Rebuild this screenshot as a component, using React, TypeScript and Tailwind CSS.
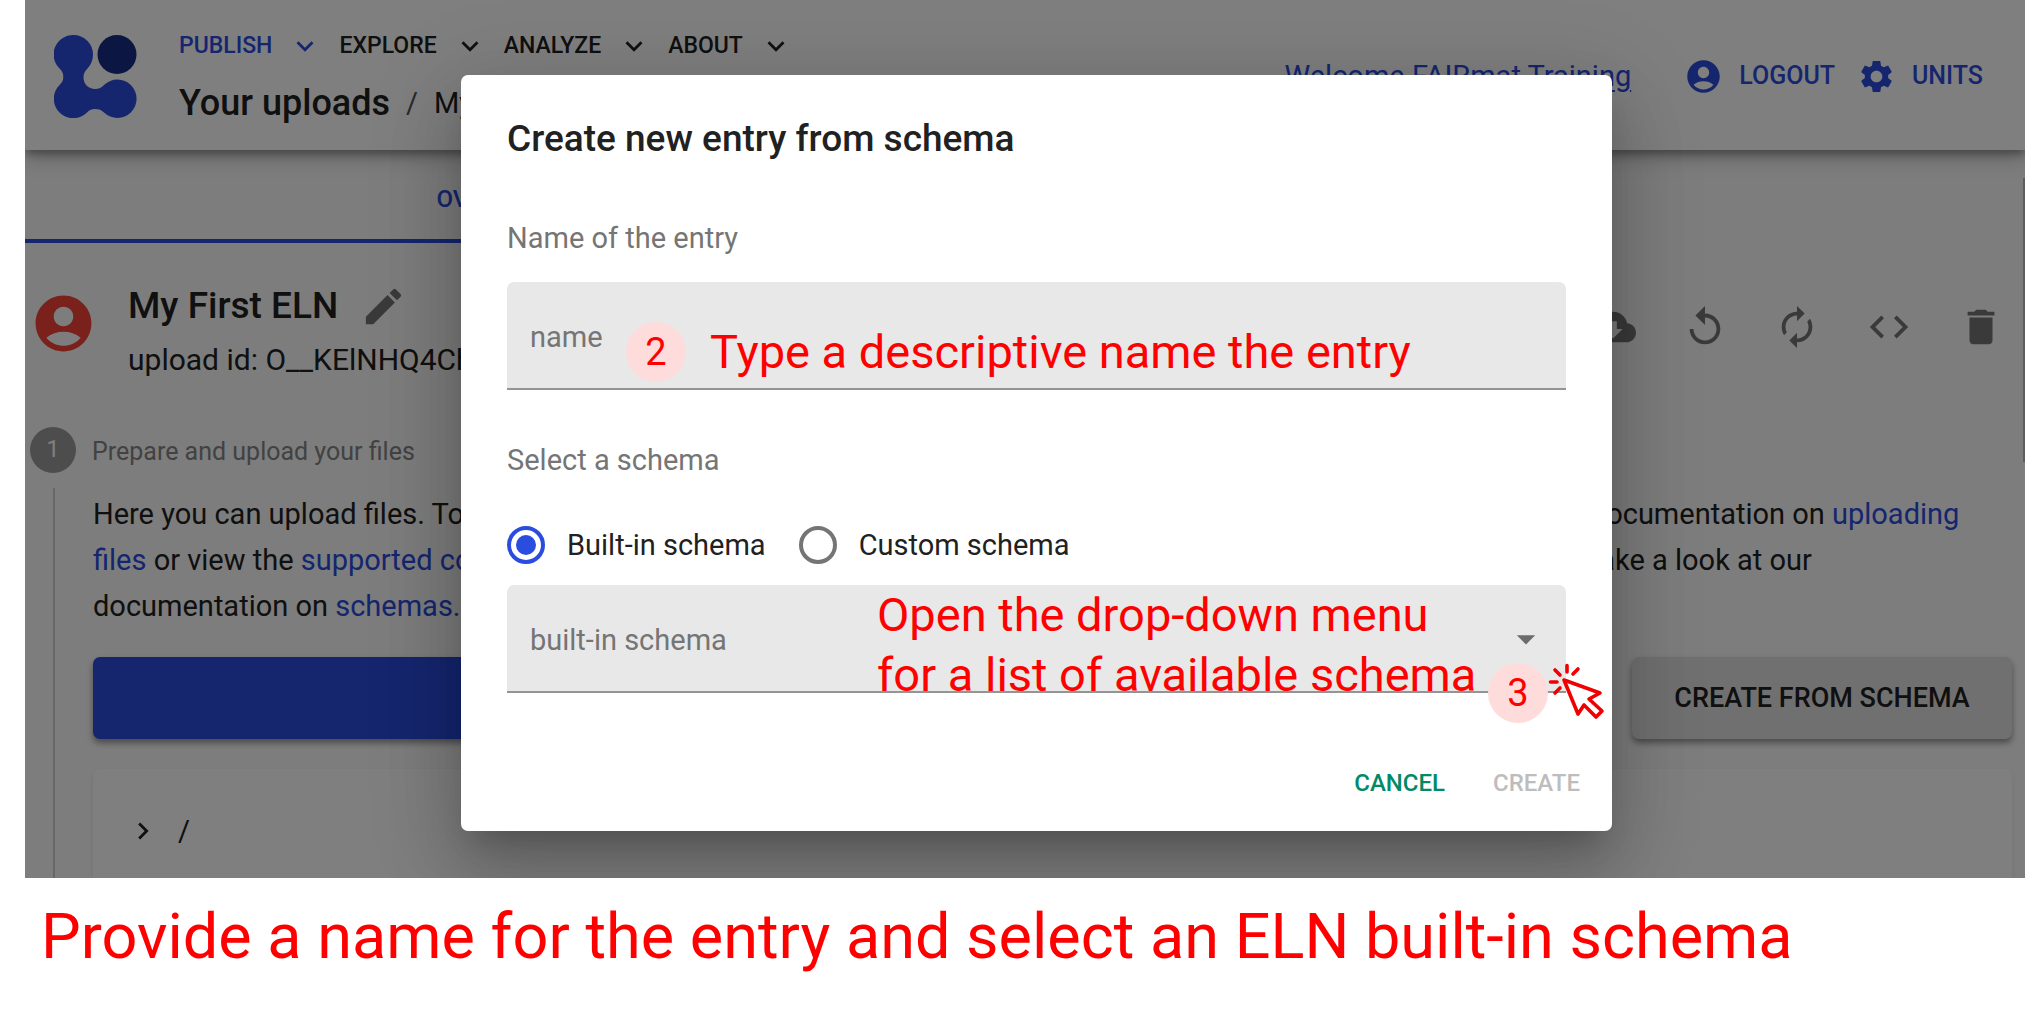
import {
  MdAccountCircle,
  MdArrowDropDown,
  MdAutorenew,
  MdChevronRight,
  MdCloudDownload,
  MdCode,
  MdDelete,
  MdEdit,
  MdExpandMore,
  MdReplay,
  MdSettings,
} from "react-icons/md";

const menu = [
  { label: "PUBLISH", active: true },
  { label: "EXPLORE", active: false },
  { label: "ANALYZE", active: false },
  { label: "ABOUT", active: false },
];

const actions = [
  { label: "Download", Icon: MdCloudDownload },
  { label: "Reload", Icon: MdReplay },
  { label: "Reprocess", Icon: MdAutorenew },
  { label: "API", Icon: MdCode },
  { label: "Delete", Icon: MdDelete },
];

function Logo() {
  return (
    <svg viewBox="0 0 83 83" className="size-[83px] shrink-0" aria-hidden="true">
      <circle cx="63" cy="19.5" r="19.5" fill="#182c84" />
      <path
        fill="#2a4cdf"
        d="M19.5 0A19.5 19.5 0 0 1 39 19.5C39 25 37 30 33.5 33.500C31 36 29.500 38.500 29.500 42.500C29.500 49 34.500 54 41 54C45 54 47.500 52.500 50 50A19.200 19.200 0 1 1 50 77.500C47.500 75 45 74 41 74C37 74 35 75.500 33 77.500A19.400 19.400 0 1 1 5.500 50C8 47.500 9.300 45.500 9.300 42C9.300 38 8 36 5.500 33.500A19.500 19.500 0 0 1 19.500 0Z"
      />
    </svg>
  );
}

function Header() {
  return (
    <header className="relative z-10 flex items-center gap-[42px] bg-white pt-[29px] pr-[42px] pb-[27px] pl-[29px] shadow-[0_4px_8px_rgba(0,0,0,0.3),0_8px_18px_rgba(0,0,0,0.22)]">
      <Logo />
      <div className="flex flex-1 flex-col gap-5">
        <nav className="flex items-center gap-[17px]">
          {menu.map(({ label, active }) => (
            <button
              key={label}
              className={
                active
                  ? "flex items-center gap-4 text-[23px] leading-[34px] font-medium text-[#2a4cdf]"
                  : "flex items-center gap-4 text-[23px] leading-[34px] font-medium"
              }
            >
              {label}
              <MdExpandMore className="size-[34px]" />
            </button>
          ))}
        </nav>
        <div className="flex items-center text-[29px] leading-10">
          <a href="#uploads" className="text-[36px] font-medium">
            Your uploads
          </a>
          <span className="px-4 text-[#555]">/</span>
          <span>My First ELN</span>
        </div>
      </div>
      <div className="flex items-center text-[#2a4cdf]">
        <a href="#account" className="mr-[53px] text-[29px] leading-10 underline underline-offset-4">
          Welcome FAIRmat Training
        </a>
        <button className="flex items-center gap-4 text-[25px] leading-10 font-medium">
          <MdAccountCircle className="size-[39px]" />
          LOGOUT
        </button>
        <button className="ml-[22px] flex items-center gap-4 text-[25px] leading-10 font-medium">
          <MdSettings className="size-[39px]" />
          UNITS
        </button>
      </div>
    </header>
  );
}

function UploadPage() {
  return (
    <div className="bg-[#fafafa] text-[#212121]">
      <Header />
      <div className="flex">
        <button className="w-[47%] border-b-4 border-[#2a4cdf] pt-[35px] pb-[26px] text-[24px] leading-7 font-medium text-[#2a4cdf]">
          OVERVIEW
        </button>
      </div>
      <main className="pt-[39px] pr-[13px] pl-[5px]">
        <div className="flex items-start">
          <MdAccountCircle className="mt-2 size-[67px] shrink-0 text-[#f44336]" />
          <div className="ml-[31px] flex flex-1 flex-col gap-[10px]">
            <div className="flex items-center gap-[22px]">
              <h1 className="text-[37px] leading-[48px] font-medium">My First ELN</h1>
              <button aria-label="Edit name">
                <MdEdit className="size-[47px] text-[#757575]" />
              </button>
            </div>
            <p className="text-[30px] leading-10">upload id: O__KElNHQ4Ch</p>
          </div>
          <div className="mt-[22px] mr-2 flex gap-[46px] text-[#757575]">
            {actions.map(({ label, Icon }) => (
              <button key={label} aria-label={label}>
                <Icon className="size-[46px]" />
              </button>
            ))}
          </div>
        </div>

        <div className="mt-[47px] flex items-center gap-4">
          <span className="flex size-[46px] items-center justify-center rounded-full bg-[#9a9a9a] text-[23px] text-white">
            1
          </span>
          <span className="pt-1 text-[25px] leading-10 text-[#858585]">Prepare and upload your files</span>
        </div>

        <div className="mt-[15px] ml-[23px] border-l-2 border-[#cfcfcf] pl-[38px]">
          <div className="flex pt-[3px] text-[29px] leading-[46px]">
            <p className="w-[78%] whitespace-nowrap">
              Here you can upload files. Top
              <br />
              <a href="#files" className="text-[#2a4cdf]">files</a> or view the{" "}
              <a href="#codes" className="text-[#2a4cdf]">supported codes</a>.
              <br />
              documentation on <a href="#schemas" className="text-[#2a4cdf]">schemas.</a>
            </p>
            <p className="whitespace-nowrap">
              documentation on <a href="#uploading" className="text-[#2a4cdf]">uploading</a>
              <br />
              take a look at our
            </p>
          </div>
          <div className="mt-7 flex gap-[30px]">
            <button
              aria-label="Upload files"
              className="h-[82px] flex-1 rounded-[7px] bg-[#2a4cdf] shadow-[0_4px_6px_rgba(0,0,0,0.4)]"
            />
            <button className="h-[82px] w-[380px] rounded-[7px] bg-[#e0e0e0] text-[27px] font-medium shadow-[0_4px_6px_rgba(0,0,0,0.4)]">
              CREATE FROM SCHEMA
            </button>
          </div>
          <div className="mt-[30px] flex items-center gap-[18px] rounded-t-[7px] bg-white pt-[45px] pb-[30px] pl-[33px] text-[29px] leading-[34px] shadow-[0_2px_5px_rgba(0,0,0,0.08)]">
            <MdChevronRight className="size-[34px]" />
            /
          </div>
        </div>
      </main>
    </div>
  );
}

function Badge({ n }: { n: number }) {
  return (
    <span className="flex size-[60px] shrink-0 items-center justify-center rounded-full bg-[#ffdcdc] text-[38px] leading-none text-[#f00]">
      {n}
    </span>
  );
}

function ClickCursor() {
  return (
    <svg
      viewBox="0 0 60 60"
      className="size-[60px]"
      fill="none"
      stroke="#f00000"
      strokeWidth="3.6"
      strokeLinecap="round"
      strokeLinejoin="round"
      aria-hidden="true"
    >
      <path fill="#fff" d="M17 18L53 31L42 37L55 49L49 55L37 43L31 52Z" />
      <path d="M20 3.500V10M31 7L26 12M8 8L13 13M3.500 20H10M13 26L8 31" />
    </svg>
  );
}

function Dialog() {
  return (
    <div
      role="dialog"
      aria-labelledby="dialog-title"
      className="w-full max-w-[1151px] rounded-[7px] bg-white pt-10 pb-7 text-[29px] leading-10 text-[#212121] shadow-[0_21px_28px_-13px_rgba(0,0,0,0.2),0_45px_72px_6px_rgba(0,0,0,0.14),0_17px_87px_15px_rgba(0,0,0,0.12)]"
    >
      <div className="px-[46px]">
        <h2 id="dialog-title" className="text-[37px] leading-[48px] font-medium">
          Create new entry from schema
        </h2>
        <label htmlFor="entry-name" className="mt-[55px] block text-[#757575]">
          Name of the entry
        </label>
        <div className="relative mt-6">
          <input
            id="entry-name"
            placeholder="name"
            className="block h-[108px] w-full rounded-t-[7px] border-b-2 border-[#949494] bg-[#e8e8e8] px-[23px] pt-1 outline-none placeholder:text-[#757575]"
          />
          <div className="pointer-events-none absolute top-10 left-[119px] flex items-center gap-6 text-[47px] leading-[60px] text-[#f00]">
            <Badge n={2} />
            <span className="whitespace-nowrap">Type a descriptive name the entry</span>
          </div>
        </div>

        <fieldset className="pt-[50px]">
          <legend className="float-left w-full text-[#757575]">Select a schema</legend>
          <div className="clear-both flex gap-[33px] pt-[45px]">
            {["Built-in schema", "Custom schema"].map((name, i) => (
              <label key={name} className="flex items-center gap-[22px]">
                <input
                  type="radio"
                  name="schema-kind"
                  defaultChecked={i === 0}
                  className="flex size-[38px] appearance-none items-center justify-center rounded-full border-4 border-[#757575] checked:border-[#2a4cdf] checked:before:size-[20px] checked:before:rounded-full checked:before:bg-[#2a4cdf] checked:before:content-['']"
                />
                {name}
              </label>
            ))}
          </div>
        </fieldset>

        <div className="relative mt-5">
          <select
            aria-label="built-in schema"
            className="block h-[108px] w-full appearance-none rounded-t-[7px] border-b-2 border-[#949494] bg-[#e8e8e8] px-[23px] pt-1 text-[#757575] outline-none"
          >
            <option>built-in schema</option>
          </select>
          <MdArrowDropDown className="pointer-events-none absolute top-8 right-[18px] size-[44px] text-[#6b6b6b]" />
          <p className="pointer-events-none absolute top-0 left-[370px] text-[47px] leading-[60px] whitespace-nowrap text-[#f00]">
            Open the drop-down menu
            <br />
            for a list of available schema
          </p>
          <div className="pointer-events-none absolute top-[78px] right-[18px]">
            <Badge n={3} />
          </div>
          <div className="pointer-events-none absolute top-[77px] -right-[41px]">
            <ClickCursor />
          </div>
        </div>
      </div>
      <div className="mt-[70px] flex justify-end gap-12 px-8 text-[24px] font-medium">
        <button className="text-[#008a67]">CANCEL</button>
        <button disabled className="text-[#bdbdbd]">
          CREATE
        </button>
      </div>
    </div>
  );
}

export default function App() {
  return (
    <div className="min-h-screen bg-white pl-[25px] font-[Roboto,sans-serif]">
      <div className="relative overflow-hidden">
        <UploadPage />
        <div className="absolute top-[178px] right-0 h-[284px] w-[2px] bg-[#bdbdbd]" />
        <div className="absolute inset-0 z-20 flex items-start justify-center bg-black/50 pt-[75px] pl-[23px]">
          <Dialog />
        </div>
      </div>
      <p className="pt-[17px] pl-4 text-[63px] leading-[84px] text-[#f00]">
        Provide a name for the entry and select an ELN built-in schema
      </p>
    </div>
  );
}
